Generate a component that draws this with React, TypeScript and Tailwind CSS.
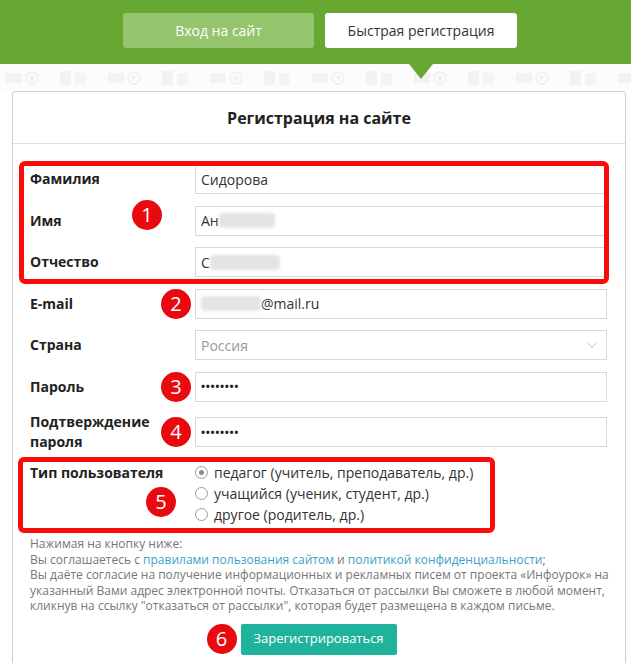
import { ChevronDown } from 'lucide-react';

// ===== numbered red badge (annotation) =====
function Badge({ n, className }: { n: number; className: string }) {
  return (
    <span className={`absolute w-[30px] h-[30px] rounded-full bg-[#e80a0f] text-white text-[20px] leading-none flex items-center justify-center z-10 ${className}`}>
      {n}
    </span>
  );
}

function Blur({ w }: { w: number }) {
  return <span className="inline-block h-[15px] bg-[#e4e4e4] blur-[1.5px] rounded-sm" style={{ width: w }} />;
}

function Row({ label, children, tall }: { label: React.ReactNode; children: React.ReactNode; tall?: boolean }) {
  return (
    <div className={`relative flex items-center ${tall ? 'h-[40px]' : 'h-[30px]'}`}>
      <div className="w-[165px] shrink-0 text-[14px] font-bold text-[#222] leading-[20px]">{label}</div>
      <div className="flex-1 h-[30px] border border-[#d9d9d9] flex items-center px-[5px] text-[14px] text-[#333]">
        {children}
      </div>
    </div>
  );
}

function Radio({ checked, label }: { checked?: boolean; label: string }) {
  return (
    <div className="flex items-center h-[21px] gap-[6px]">
      <span className="w-[13px] h-[13px] rounded-full border border-[#9a9a9a] flex items-center justify-center bg-white">
        {checked && <span className="w-[5px] h-[5px] rounded-full bg-[#8a8a8a]" />}
      </span>
      <span className="text-[14px] text-[#333]">{label}</span>
    </div>
  );
}

function Pattern() {
  const items = Array.from({ length: 8 });
  return (
    <div className="h-[27px] flex items-center gap-[20px] pl-[6px] overflow-hidden bg-[#fcfcfc] blur-[0.6px]">
      {items.map((_, i) => (
        <div key={i} className="flex items-center gap-[20px] shrink-0">
          <svg width="34" height="14" viewBox="0 0 34 14">
            <rect x="0" y="2" width="16" height="10" rx="1" fill="#f1f2f4" />
            <circle cx="26" cy="7" r="6" fill="none" stroke="#eeeff1" strokeWidth="1.5" />
            <path d="M26 4v6M23 7h6" stroke="#eeeff1" strokeWidth="1.5" />
          </svg>
          <svg width="28" height="16" viewBox="0 0 28 16">
            <rect x="0" y="1" width="11" height="14" fill="#f1f2f4" />
            <rect x="15" y="3" width="11" height="12" fill="#f3f4f5" />
          </svg>
        </div>
      ))}
    </div>
  );
}

export default function App() {
  return (
    <div className="w-full min-h-screen bg-white overflow-hidden" style={{ fontFamily: '"Open Sans", "Noto Sans", sans-serif' }}>
      {/* green header with tabs */}
      <div className="relative z-10 h-[64px] bg-[#67a832] flex justify-center gap-[11px] pt-[13px] pl-[9px]">
        <div className="w-[191px] h-[35px] rounded-[3px] bg-[#94c56d] text-white text-[14px] flex items-center justify-center">
          Вход на сайт
        </div>
        <div className="relative w-[192px] h-[35px] rounded-[3px] bg-white text-[#333] text-[14px] flex items-center justify-center">
          Быстрая регистрация
          <span className="absolute left-1/2 -translate-x-1/2 top-[51px] w-0 h-0 border-l-[12px] border-r-[12px] border-t-[15px] border-l-transparent border-r-transparent border-t-[#67a832]" />
        </div>
      </div>

      <Pattern />

      {/* card */}
      <div className="ml-[12px] mr-[5px] border border-[#cfcfcf] rounded-[3px] bg-white pb-[20px]">
        <div className="h-[52px] border-b border-[#dedede] flex items-center justify-center text-[16px] font-bold text-[#222]">
          Регистрация на сайте
        </div>

        <div className="pl-[17px] pr-[18px] pt-[20px]">
          <div className="flex flex-col gap-[11.5px]">
            <div className="relative flex flex-col gap-[11.5px]">
              <Row label="Фамилия">Сидорова</Row>
              <Row label="Имя"><span>Ан</span><Blur w={56} /></Row>
              <Row label="Отчество"><span>С</span><Blur w={70} /></Row>
              <span className="absolute left-[-11px] right-[-2px] top-[-3px] bottom-[-7px] border-[5px] border-[#ff0a0a] rounded-[6px] pointer-events-none" />
              <Badge n={1} className="left-[102px] top-[36px]" />
            </div>
            <div className="relative">
              <Row label="E-mail"><Blur w={60} /><span>@mail.ru</span></Row>
              <Badge n={2} className="left-[131px] top-1/2 -translate-y-1/2" />
            </div>
            <Row label="Страна">
              <span className="flex-1 text-[#999]">Россия</span>
              <ChevronDown size={18} strokeWidth={1} color="#b5b5b5" />
            </Row>
            <div className="relative">
              <Row label="Пароль"><span className="text-[11px] font-bold tracking-[0.6px] text-[#222]">••••••••</span></Row>
              <Badge n={3} className="left-[131px] top-1/2 -translate-y-1/2" />
            </div>
            <div className="relative -mt-[1px]">
              <Row label={<>Подтверждение<br />пароля</>} tall><span className="text-[11px] font-bold tracking-[0.6px] text-[#222]">••••••••</span></Row>
              <Badge n={4} className="left-[131px] top-1/2 -translate-y-1/2" />
            </div>
          </div>

          <div className="relative flex mt-[10px]">
            <div className="w-[165px] shrink-0 text-[14px] font-bold text-[#222] leading-[21px]">Тип пользователя</div>
            <div className="flex flex-col">
              <Radio checked label="педагог (учитель, преподаватель, др.)" />
              <Radio label="учащийся (ученик, студент, др.)" />
              <Radio label="другое (родитель, др.)" />
            </div>
            <span className="absolute left-[-12px] w-[477px] top-[-5px] bottom-[-8px] border-[5px] border-[#ff0a0a] rounded-[6px] pointer-events-none" />
            <Badge n={5} className="left-[116px] top-[25px]" />
          </div>

          <div className="mt-[11px] text-[12px] leading-[15.5px] text-[#777] whitespace-nowrap">
            <div>Нажимая на кнопку ниже:</div>
            <div>
              Вы соглашаетесь с <span className="text-[#3aa3c6]">правилами пользования сайтом</span> и{' '}
              <span className="text-[#3aa3c6]">политикой конфиденциальности</span>;
            </div>
            <div>Вы даёте согласие на получение информационных и рекламных писем от проекта «Инфоурок» на</div>
            <div>указанный Вами адрес электронной почты. Отказаться от рассылки Вы сможете в любой момент,</div>
            <div>кликнув на ссылку "отказаться от рассылки", которая будет размещена в каждом письме.</div>
          </div>

          <div className="flex justify-center mt-[10px]">
            <div className="relative h-[31px] w-[156px] bg-[#1fb39b] text-white text-[13px] flex items-center justify-center rounded-[2px]">
              Зарегистрироваться
              <Badge n={6} className="right-full mr-[4px] top-1/2 -translate-y-1/2" />
            </div>
          </div>
        </div>
      </div>
    </div>
  );
}
